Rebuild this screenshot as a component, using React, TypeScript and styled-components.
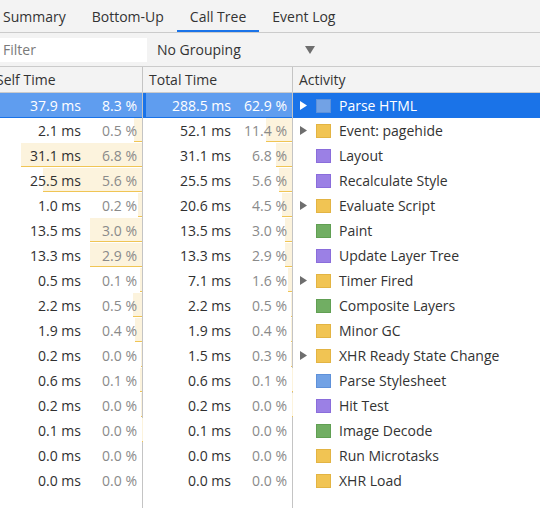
import React from 'react';
import styled, { createGlobalStyle } from 'styled-components';

const GlobalStyle = createGlobalStyle`
    html, body {
        margin: 0;
        padding: 0;
        background: #fff;
        overflow: hidden;
    }

    body {
        font-family: "Open Sans", "Noto Sans", sans-serif;
        font-size: 14px;
        color: #333;
    }
`;

type Kind = 'loading' | 'scripting' | 'rendering' | 'painting';

const SWATCH: Record<Kind, { fill: string; edge: string }> = {
    loading: { fill: '#72a2e5', edge: '#5f91d9' },
    scripting: { fill: '#f1c453', edge: '#e3b443' },
    rendering: { fill: '#9b80e5', edge: '#8a6ddb' },
    painting: { fill: '#71ae63', edge: '#619f53' },
};

interface Entry {
    self: number;
    selfPct: number;
    total: number;
    totalPct: number;
    name: string;
    kind: Kind;
    children?: boolean;
}

const ROWS: Entry[] = [
    { self: 37.9, selfPct: 8.3, total: 288.5, totalPct: 62.9, name: 'Parse HTML', kind: 'loading', children: true },
    { self: 2.1, selfPct: 0.5, total: 52.1, totalPct: 11.4, name: 'Event: pagehide', kind: 'scripting', children: true },
    { self: 31.1, selfPct: 6.8, total: 31.1, totalPct: 6.8, name: 'Layout', kind: 'rendering' },
    { self: 25.5, selfPct: 5.6, total: 25.5, totalPct: 5.6, name: 'Recalculate Style', kind: 'rendering' },
    { self: 1.0, selfPct: 0.2, total: 20.6, totalPct: 4.5, name: 'Evaluate Script', kind: 'scripting', children: true },
    { self: 13.5, selfPct: 3.0, total: 13.5, totalPct: 3.0, name: 'Paint', kind: 'painting' },
    { self: 13.3, selfPct: 2.9, total: 13.3, totalPct: 2.9, name: 'Update Layer Tree', kind: 'rendering' },
    { self: 0.5, selfPct: 0.1, total: 7.1, totalPct: 1.6, name: 'Timer Fired', kind: 'scripting', children: true },
    { self: 2.2, selfPct: 0.5, total: 2.2, totalPct: 0.5, name: 'Composite Layers', kind: 'painting' },
    { self: 1.9, selfPct: 0.4, total: 1.9, totalPct: 0.4, name: 'Minor GC', kind: 'scripting' },
    { self: 0.2, selfPct: 0.0, total: 1.5, totalPct: 0.3, name: 'XHR Ready State Change', kind: 'scripting', children: true },
    { self: 0.6, selfPct: 0.1, total: 0.6, totalPct: 0.1, name: 'Parse Stylesheet', kind: 'loading' },
    { self: 0.2, selfPct: 0.0, total: 0.2, totalPct: 0.0, name: 'Hit Test', kind: 'rendering' },
    { self: 0.1, selfPct: 0.0, total: 0.1, totalPct: 0.0, name: 'Image Decode', kind: 'painting' },
    { self: 0.0, selfPct: 0.0, total: 0.0, totalPct: 0.0, name: 'Run Microtasks', kind: 'scripting' },
    { self: 0.0, selfPct: 0.0, total: 0.0, totalPct: 0.0, name: 'XHR Load', kind: 'scripting' },
];

const TABS = ['Summary', 'Bottom-Up', 'Call Tree', 'Event Log'];

const MAX_SELF = Math.max(...ROWS.map((r) => r.self));
const MAX_TOTAL = Math.max(...ROWS.map((r) => r.total));

const SELF_W = 153;
const TOTAL_W = 150;

const Expander: React.FC<{ color: string }> = ({ color }) => (
    <svg width="7" height="9" viewBox="0 0 7 9">
        <path d="M0 0 L7 4.5 L0 9 Z" fill={color} />
    </svg>
);

const Caret: React.FC = () => (
    <svg width="10" height="8" viewBox="0 0 10 8">
        <path d="M0 0 L10 0 L5 8 Z" fill="#6e6e6e" />
    </svg>
);

const TimeCell: React.FC<{
    width: number;
    inset: number;
    value: number;
    pct: number;
    max: number;
    selected: boolean;
}> = ({ width, inset, value, pct, max, selected }) => (
    <NumCell $width={width}>
        <Track $inset={inset}>
            <Bar $selected={selected} style={{ width: `${(value / max) * 100}%` }} />
        </Track>
        <Ms $selected={selected}>{value.toFixed(1)} ms</Ms>
        <Pct $selected={selected}>{pct.toFixed(1)} %</Pct>
    </NumCell>
);

const App: React.FC = () => {
    return (
        <>
            <GlobalStyle />
            <Page>
                <Tabs>
                    {TABS.map((t) => (
                        <Tab key={t} $active={t === 'Call Tree'}>
                            {t}
                        </Tab>
                    ))}
                </Tabs>

                <Toolbar>
                    <Filter placeholder="Filter" />
                    <Grouping>
                        <span>No Grouping</span>
                        <Caret />
                    </Grouping>
                </Toolbar>

                <Grid>
                    <HeaderRow>
                        <HeadCell $width={SELF_W}>Self Time</HeadCell>
                        <HeadCell $width={TOTAL_W}>Total Time</HeadCell>
                        <HeadCell>Activity</HeadCell>
                    </HeaderRow>

                    {ROWS.map((r, i) => {
                        const selected = i === 0;
                        return (
                            <Row key={r.name} $selected={selected}>
                                <TimeCell
                                    width={SELF_W}
                                    inset={5}
                                    value={r.self}
                                    pct={r.selfPct}
                                    max={MAX_SELF}
                                    selected={selected}
                                />
                                <TimeCell
                                    width={TOTAL_W}
                                    inset={3}
                                    value={r.total}
                                    pct={r.totalPct}
                                    max={MAX_TOTAL}
                                    selected={selected}
                                />
                                <ActivityCell $selected={selected}>
                                    <ExpandSlot>
                                        {r.children && <Expander color={selected ? '#fff' : '#6e6e6e'} />}
                                    </ExpandSlot>
                                    <Swatch $kind={r.kind} />
                                    <span>{r.name}</span>
                                </ActivityCell>
                            </Row>
                        );
                    })}

                    <Filler>
                        <EmptyCell $width={SELF_W} />
                        <EmptyCell $width={TOTAL_W} />
                    </Filler>
                </Grid>
            </Page>
        </>
    );
};

const Page = styled.div`
    width: 550px;
    height: 100vh;
    margin-left: -10px;
    display: flex;
    flex-direction: column;
`;

const Tabs = styled.div`
    height: 32px;
    display: flex;
    background-color: #f3f3f3;
    border-bottom: 1px solid #cbcbcb;
`;

const Tab = styled.div<{ $active?: boolean }>`
    box-sizing: border-box;
    height: 32px;
    padding: 0 13px;
    display: flex;
    align-items: center;
    color: #333;
    border-bottom: 2px solid ${(p) => (p.$active ? '#1a73e8' : 'transparent')};
    padding-top: 2px;
`;

const Toolbar = styled.div`
    height: 33px;
    display: flex;
    align-items: center;
    background-color: #f3f3f3;
    border-bottom: 1px solid #cbcbcb;
`;

const Filter = styled.input`
    box-sizing: border-box;
    width: 157px;
    height: 24px;
    margin: 0 10px 0 0;
    padding: 0 0 0 13px;
    border: none;
    outline: none;
    background: #fff;
    font-family: inherit;
    font-size: 14px;
    color: #333;

    &::placeholder {
        color: #7a7a7a;
    }
`;

const Grouping = styled.div`
    width: 166px;
    display: flex;
    align-items: center;
    justify-content: space-between;
    padding-right: 8px;
    box-sizing: border-box;
    color: #333;
`;

const Grid = styled.div`
    flex: 1;
    display: flex;
    flex-direction: column;
`;

const HeaderRow = styled.div`
    height: 25px;
    display: flex;
    background-color: #f3f3f3;
    border-bottom: 1px solid #cbcbcb;
`;

const HeadCell = styled.div<{ $width?: number }>`
    box-sizing: border-box;
    ${(p) => (p.$width ? `width: ${p.$width}px; border-right: 1px solid #c4c4c4;` : 'flex: 1;')}
    padding-left: 6px;
    display: flex;
    align-items: center;
    color: #333;
`;

const Row = styled.div<{ $selected?: boolean }>`
    height: 25px;
    display: flex;
    background-color: ${(p) => (p.$selected ? '#1a73e8' : '#fff')};
`;

const NumCell = styled.div<{ $width: number }>`
    box-sizing: border-box;
    width: ${(p) => p.$width}px;
    position: relative;
    display: flex;
    align-items: center;
    justify-content: flex-end;
    gap: 6px;
    padding-right: 5px;
    border-right: 1px solid #c4c4c4;
`;

const Track = styled.div<{ $inset: number }>`
    position: absolute;
    top: 0;
    right: 0;
    left: ${(p) => p.$inset}px;
    height: 24px;
`;

const Bar = styled.div<{ $selected?: boolean }>`
    position: absolute;
    top: 0;
    right: 0;
    height: 100%;
    box-sizing: border-box;
    background-color: ${(p) => (p.$selected ? 'rgba(255, 255, 255, 0.3)' : '#fcf3dd')};
    border-bottom: 1px solid ${(p) => (p.$selected ? 'transparent' : '#f0c555')};
`;

const Ms = styled.span<{ $selected?: boolean }>`
    position: relative;
    color: ${(p) => (p.$selected ? '#fff' : '#303030')};
    white-space: nowrap;
`;

const Pct = styled.span<{ $selected?: boolean }>`
    position: relative;
    width: 50px;
    text-align: right;
    color: ${(p) => (p.$selected ? '#fff' : '#8a8a8a')};
    white-space: nowrap;
`;

const ActivityCell = styled.div<{ $selected?: boolean }>`
    flex: 1;
    display: flex;
    align-items: center;
    padding-left: 7px;
    color: ${(p) => (p.$selected ? '#fff' : '#333')};
    white-space: nowrap;
`;

const ExpandSlot = styled.div`
    width: 7px;
    height: 9px;
    margin-right: 9px;
    display: flex;
`;

const Swatch = styled.div<{ $kind: Kind }>`
    box-sizing: border-box;
    width: 15px;
    height: 14px;
    margin-right: 8px;
    background-color: ${(p) => SWATCH[p.$kind].fill};
    border: 1px solid ${(p) => SWATCH[p.$kind].edge};
`;

const Filler = styled.div`
    flex: 1;
    display: flex;
`;

const EmptyCell = styled.div<{ $width: number }>`
    box-sizing: border-box;
    width: ${(p) => p.$width}px;
    border-right: 1px solid #c4c4c4;
`;

export default App;
